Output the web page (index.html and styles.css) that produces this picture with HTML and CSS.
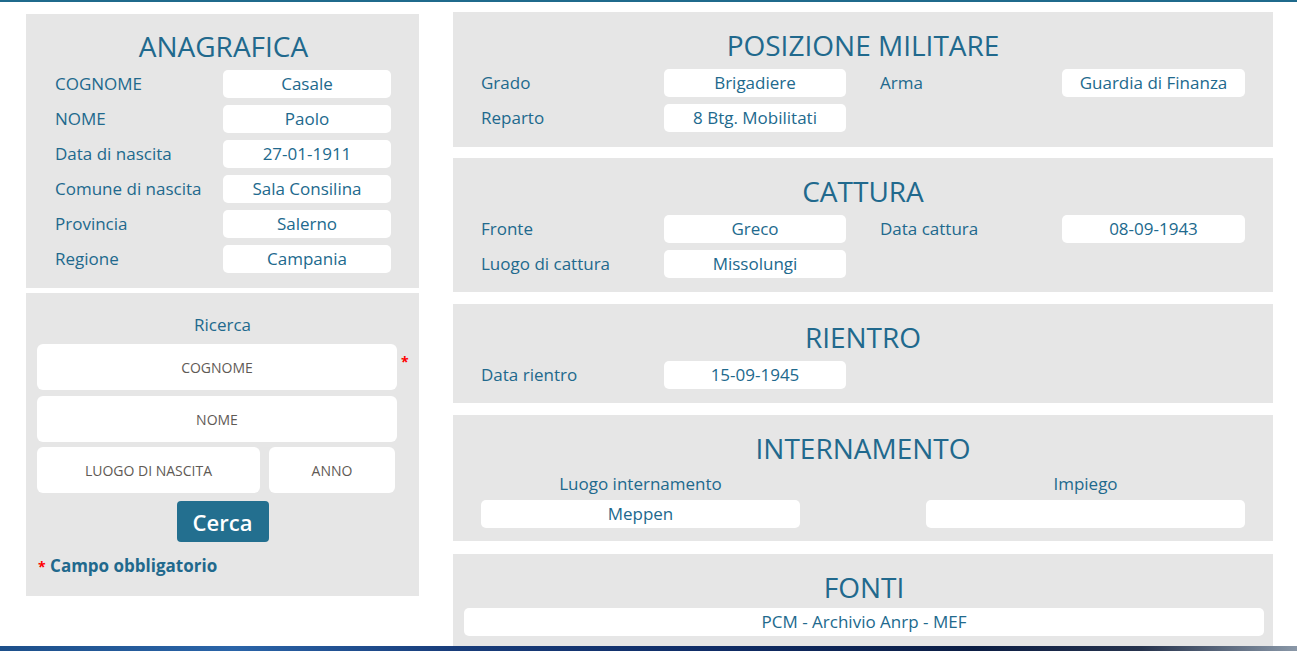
FILE: index.html
```html
<!DOCTYPE html>
<html lang="it">
<head>
    <meta charset="UTF-8">
    <meta name="viewport" content="width=device-width, initial-scale=1.0">
    <title>Scheda internato</title>
    <link rel="stylesheet" href="styles.css">
</head>
<body>
    <div class="page">
        <!-- Colonna sinistra -->
        <div class="left-col">
            <div class="panel anagrafica">
                <h2 class="panel-title">ANAGRAFICA</h2>
                <div class="ana-grid">
                    <span class="label">COGNOME</span><span class="value">Casale</span>
                    <span class="label">NOME</span><span class="value">Paolo</span>
                    <span class="label">Data di nascita</span><span class="value">27-01-1911</span>
                    <span class="label">Comune di nascita</span><span class="value">Sala Consilina</span>
                    <span class="label">Provincia</span><span class="value">Salerno</span>
                    <span class="label">Regione</span><span class="value">Campania</span>
                </div>
            </div>

            <div class="panel ricerca">
                <h3 class="search-title">Ricerca</h3>
                <form class="search-form" onsubmit="return false">
                    <div class="field required">
                        <input type="text" placeholder="COGNOME">
                        <span class="star">*</span>
                    </div>
                    <div class="field">
                        <input type="text" placeholder="NOME">
                    </div>
                    <div class="field split">
                        <input type="text" placeholder="LUOGO DI NASCITA">
                        <input type="text" class="year" placeholder="ANNO">
                    </div>
                    <div class="actions">
                        <button type="submit" class="btn-search">Cerca</button>
                    </div>
                </form>
                <p class="note"><span class="star">*</span> Campo obbligatorio</p>
            </div>
        </div>

        <!-- Colonna destra -->
        <div class="right-col">
            <div class="panel wide">
                <h2 class="panel-title">POSIZIONE MILITARE</h2>
                <div class="info-grid">
                    <span class="label">Grado</span><span class="value">Brigadiere</span>
                    <span class="label second">Arma</span><span class="value">Guardia di Finanza</span>
                    <span class="label">Reparto</span><span class="value">8 Btg. Mobilitati</span>
                </div>
            </div>

            <div class="panel wide">
                <h2 class="panel-title">CATTURA</h2>
                <div class="info-grid">
                    <span class="label">Fronte</span><span class="value">Greco</span>
                    <span class="label second">Data cattura</span><span class="value">08-09-1943</span>
                    <span class="label">Luogo di cattura</span><span class="value">Missolungi</span>
                </div>
            </div>

            <div class="panel wide">
                <h2 class="panel-title">RIENTRO</h2>
                <div class="info-grid">
                    <span class="label">Data rientro</span><span class="value">15-09-1945</span>
                </div>
            </div>

            <div class="panel wide internamento">
                <h2 class="panel-title">INTERNAMENTO</h2>
                <div class="intern-grid">
                    <div class="intern-col">
                        <span class="label">Luogo internamento</span>
                        <span class="value">Meppen</span>
                    </div>
                    <div class="intern-col">
                        <span class="label">Impiego</span>
                        <span class="value"></span>
                    </div>
                </div>
            </div>

            <div class="panel wide fonti">
                <h2 class="panel-title">FONTI</h2>
                <span class="value">PCM - Archivio Anrp - MEF</span>
            </div>
        </div>
    </div>

    <div class="footer-band"></div>
</body>
</html>
```

FILE: styles.css
```css
* {
    margin: 0;
    padding: 0;
    box-sizing: border-box;
}

body {
    background-color: #fff;
    color: #21698d;
    font-family: "Open Sans", Arial, sans-serif;
    font-size: 17px;
    border-top: 2px solid #1f6a8c;
}

.page {
    display: flex;
    align-items: flex-start;
    gap: 34px;
    padding: 10px 0 0 26px;
}

.left-col {
    width: 393px;
    margin-top: 2px;
}

.right-col {
    width: 820px;
}

.panel {
    background-color: #e6e6e6;
}

.panel-title {
    font-weight: 400;
    font-size: 28px;
    line-height: 36px;
    text-align: center;
}

.label {
    line-height: 28px;
    white-space: nowrap;
}

.value {
    display: block;
    height: 28px;
    line-height: 28px;
    background-color: #fff;
    border-radius: 5px;
    text-align: center;
    white-space: nowrap;
}

/* Anagrafica */
.anagrafica {
    padding: 14px 27px 15px 29px;
}

.anagrafica .panel-title {
    margin-bottom: 6px;
}

.ana-grid {
    display: grid;
    grid-template-columns: 168px 168px;
    row-gap: 7px;
}

/* Ricerca */
.ricerca {
    margin-top: 5px;
    padding: 19px 11px 18px 11px;
    height: 303px;
}

.search-title {
    font-weight: 400;
    font-size: 17px;
    line-height: 26px;
    text-align: center;
    margin-bottom: 6px;
}

.search-form .field {
    position: relative;
    display: flex;
    gap: 9px;
    margin-bottom: 6px;
    width: 360px;
}

.search-form .split {
    margin-bottom: 0;
    margin-top: -1px;
}

.search-form input {
    width: 100%;
    height: 46px;
    border: none;
    border-radius: 6px;
    background-color: #fff;
    font-family: "Open Sans", Arial, sans-serif;
    font-size: 14px;
    text-align: center;
    color: #555;
    outline: none;
}

.search-form input::placeholder {
    color: #5f5a55;
    text-transform: uppercase;
}

.search-form .split input {
    width: 223px;
}

.search-form .split input.year {
    width: 126px;
}

.star {
    color: #f00;
    font-weight: 700;
    font-size: 14px;
}

.required .star {
    position: absolute;
    left: 364px;
    top: 8px;
}

.actions {
    display: flex;
    justify-content: center;
    margin-top: 8px;
}

.btn-search {
    width: 92px;
    height: 41px;
    background-color: #236f8f;
    color: #fff;
    border: none;
    border-radius: 4px;
    font-family: "Open Sans", Arial, sans-serif;
    font-size: 22px;
    font-weight: 600;
    cursor: pointer;
}

.note {
    margin-top: 12px;
    padding-left: 1px;
    font-weight: 700;
    font-size: 17px;
}

/* Pannelli destra */
.wide {
    padding: 15px 28px 14px 28px;
    margin-bottom: 12px;
}

.wide:first-child {
    padding-bottom: 15px;
    margin-bottom: 11px;
}

.wide .panel-title {
    margin-bottom: 6px;
}

.info-grid {
    display: grid;
    grid-template-columns: 183px 182px 216px 183px;
    row-gap: 7px;
}

.info-grid .second {
    padding-left: 34px;
}

.internamento {
    padding-bottom: 13px;
    margin-bottom: 13px;
}

.internamento .panel-title {
    margin-bottom: 4px;
}

.intern-grid {
    display: flex;
    justify-content: space-between;
}

.intern-col {
    width: 319px;
    display: flex;
    flex-direction: column;
    align-items: center;
    gap: 2px;
}

.intern-col .value {
    width: 100%;
}

.fonti {
    padding: 15px 9px 16px 11px;
}

.fonti .panel-title {
    margin-bottom: 3px;
}

/* fascia immagine in fondo */
.footer-band {
    position: fixed;
    left: 0;
    right: 0;
    bottom: 0;
    height: 5px;
    background: linear-gradient(90deg, #1d4f8a 0%, #2a64a8 18%, #183c7a 35%, #0f2c66 55%, #0b1d44 75%, #26334d 88%, #8a98a8 100%);
}
```
